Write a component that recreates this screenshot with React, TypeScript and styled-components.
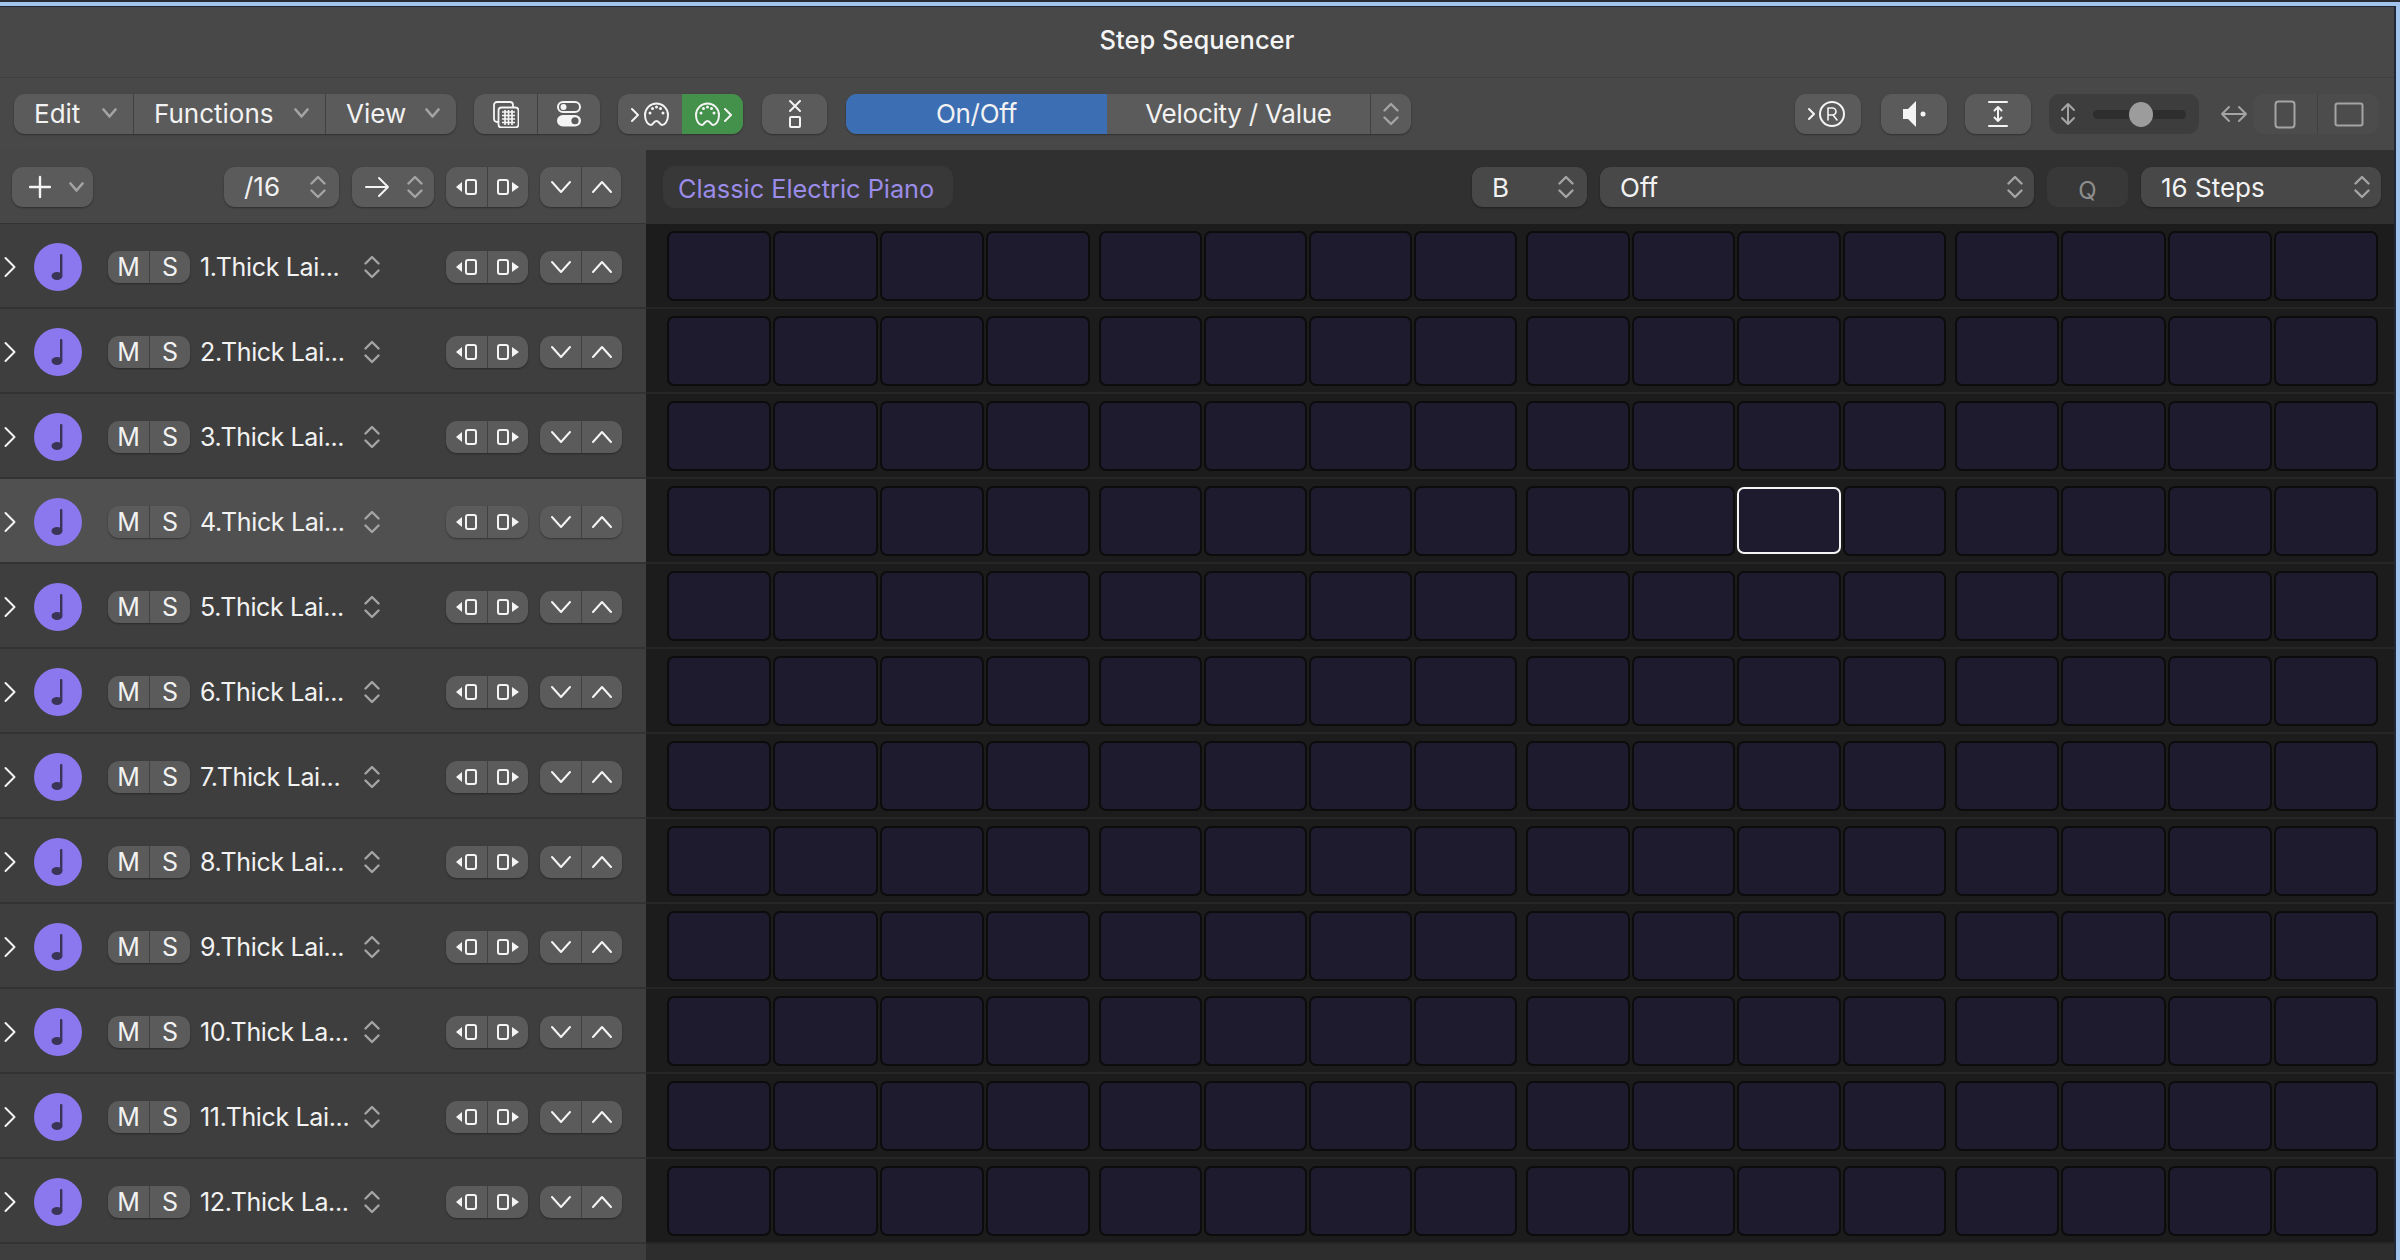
import React from "react";
import styled, { createGlobalStyle } from "styled-components";

const GlobalStyle = createGlobalStyle`
  html, body { margin: 0; padding: 0; background: #1b1b1b; }
  body { font-family: Inter, "Liberation Sans", sans-serif; color: #f2f2f2; }
`;

const rows = [
  "1.Thick Lai...", "2.Thick Lai...", "3.Thick Lai...", "4.Thick Lai...",
  "5.Thick Lai...", "6.Thick Lai...", "7.Thick Lai...", "8.Thick Lai...",
  "9.Thick Lai...", "10.Thick La...", "11.Thick Lai...", "12.Thick La...",
];

const Icon = ({ w, h, children, dim }: { w: number; h: number; children: React.ReactNode; dim?: boolean }) => (
  <svg width={w} height={h} viewBox={`0 0 ${w} ${h}`} fill="none" stroke={dim ? "#a4a4a4" : "#f4f4f4"} strokeWidth="2" strokeLinecap="round" strokeLinejoin="round">
    {children}
  </svg>
);

const Updown = ({ dim = true }: { dim?: boolean }) => (
  <Icon w={16} h={24} dim={dim}>
    <path d="M1.500 8.500L8 2l6.500 6.500M1.500 15.500L8 22l6.500-6.500" strokeWidth="2.400" />
  </Icon>
);

const Chevron = ({ up }: { up?: boolean }) => (
  <Icon w={20} h={14}>
    <path d={up ? "M1 12l9-10 9 10" : "M1 2l9 10 9-10"} />
  </Icon>
);

const Caret = () => (
  <Icon w={15} h={10} dim>
    <path d="M1.500 1.500l6 7 6-7" strokeWidth="2.600" />
  </Icon>
);

const PadLeft = () => (
  <Icon w={24} h={18}>
    <path d="M7 4v10L1 9z" fill="#f4f4f4" stroke="none" />
    <rect x="11" y="2" width="10" height="14" rx="2" />
  </Icon>
);

const PadRight = () => (
  <Icon w={24} h={18}>
    <rect x="2" y="2" width="10" height="14" rx="2" />
    <path d="M16 4v10l7-5z" fill="#f4f4f4" stroke="none" />
  </Icon>
);

const Midi = ({ out }: { out?: boolean }) => (
  <Icon w={38} h={28}>
    <g transform={out ? "translate(0 0)" : "translate(12 0)"}>
      <path d="M8 25c-3 0-6-4-6-10a11.500 11.500 0 0 1 23 0c0 6-3 10-6 10-2 0-2.500-4-5.500-4S10 25 8 25z" />
      <g fill="#f4f4f4" stroke="none">
        <circle cx="7" cy="13" r="1.500" /><circle cx="9.500" cy="8.500" r="1.500" /><circle cx="13.500" cy="7" r="1.500" /><circle cx="17.500" cy="8.500" r="1.500" /><circle cx="20" cy="13" r="1.500" />
      </g>
    </g>
    <path d={out ? "M31 9l6 6-6 6" : "M1 9l6 6-6 6"} />
  </Icon>
);

const Note = () => (
  <svg width="18" height="28" viewBox="0 0 18 28" fill="#3a3556">
    <rect x="11" y="1" width="2.400" height="22" rx="1" />
    <ellipse cx="8" cy="23" rx="5.500" ry="4" />
  </svg>
);

const Page = styled.div`
  width: 2400px;
  height: 1260px;
  overflow: hidden;
  display: flex;
  flex-direction: column;
  border-top: 2px solid #2a2d33;
  box-sizing: border-box;
  position: relative;
`;

const BlueLine = styled.div`
  height: 4px;
  flex: none;
  background: #a2c5ee;
`;

const TitleBar = styled.div`
  height: 72px;
  flex: none;
  box-sizing: border-box;
  display: flex;
  align-items: center;
  justify-content: center;
  padding: 0 6px 6px 0;
  background: #484848;
  border-top: 1px solid #1f2838;
  border-bottom: 1px solid #3f3f3f;
  font-size: 25.500px;
  font-weight: 500;
  color: #f4f4f4;
`;

const Toolbar = styled.div`
  height: 72px;
  flex: none;
  display: flex;
  align-items: center;
  background: #484848;
  padding: 0 21px 0 14px;
  font-size: 26px;
`;

const Group = styled.div<{ $w?: number; $ml?: number; $h?: number; $flat?: boolean; $small?: boolean }>`
  display: flex;
  align-items: stretch;
  flex: none;
  height: ${(p) => p.$h ?? 40}px;
  width: ${(p) => (p.$w ? `${p.$w}px` : "auto")};
  margin-left: ${(p) => p.$ml ?? 0}px;
  border-radius: 11px;
  overflow: hidden;
  font-size: ${(p) => (p.$small ? "25px" : "inherit")};
  background: ${(p) => (p.$flat ? "#4c4c4c" : "#5b5b5b")};
  box-shadow: ${(p) => (p.$flat ? "none" : "0 1px 2px rgba(0, 0, 0, 0.35)")};
`;

const Seg = styled.div<{ $w?: number; $on?: string; $sep?: boolean; $grow?: boolean; $gap?: number }>`
  display: flex;
  align-items: center;
  justify-content: center;
  box-sizing: border-box;
  flex: ${(p) => (p.$grow ? "1" : "none")};
  gap: ${(p) => p.$gap ?? 14}px;
  width: ${(p) => (p.$w ? `${p.$w}px` : "auto")};
  background: ${(p) => p.$on ?? "transparent"};
  border-left: ${(p) => (p.$sep ? "1px solid #414141" : "none")};
`;

const MenuSeg = styled(Seg)`
  justify-content: space-between;
  padding: 0 16px 2px 20px;
`;

const TextSeg = styled(Seg)`
  padding-bottom: 2px;
  letter-spacing: -0.25px;
`;

const AddSeg = styled(Seg)`
  justify-content: flex-start;
  padding-left: 17px;
`;

const Spacer = styled.div`
  flex: 1;
`;

const SliderBox = styled.div`
  flex: none;
  width: 150px;
  height: 40px;
  margin-left: 18px;
  display: flex;
  align-items: center;
  padding-left: 11px;
  box-sizing: border-box;
  gap: 17px;
  border-radius: 11px;
  background: #3d3d3d;
`;

const Track = styled.div`
  position: relative;
  width: 93px;
  height: 9px;
  border-radius: 5px;
  background: #2e2e2e;
`;

const Thumb = styled.div`
  position: absolute;
  left: 36px;
  top: -8px;
  width: 24px;
  height: 25px;
  border-radius: 50%;
  background: #9c9c9c;
`;

const WidthArrow = styled.div`
  flex: none;
  display: flex;
  margin-left: 21px;
`;

const Body = styled.div`
  flex: 1;
  display: flex;
  min-height: 0;
`;

const Left = styled.div`
  flex: none;
  width: 646px;
  background: #3e3e3e;
  display: flex;
  flex-direction: column;
`;

const Right = styled.div`
  flex: 1;
  background: #1c1c1c;
  display: flex;
  flex-direction: column;
`;

const LeftHead = styled.div`
  height: 73px;
  flex: none;
  display: flex;
  align-items: center;
  background: #474747;
  border-bottom: 1px solid #333;
  padding: 0 0 0 12px;
  font-size: 26px;
`;

const RightHead = styled.div`
  height: 74px;
  flex: none;
  display: flex;
  align-items: center;
  background: #303030;
  padding-left: 17px;
  font-size: 26px;
`;

const Classic = styled.div`
  flex: none;
  width: 290px;
  height: 42px;
  box-sizing: border-box;
  padding: 2px 0 0 15px;
  display: flex;
  align-items: center;
  border-radius: 12px;
  background: #383838;
  color: #9a8ce8;
  font-size: 25.300px;
`;

const Select = styled.div<{ $w: number; $ml: number }>`
  flex: none;
  width: ${(p) => p.$w}px;
  margin-left: ${(p) => p.$ml}px;
  height: 40px;
  box-sizing: border-box;
  padding: 0 ${(p) => (p.$w > 200 ? 11 : 13)}px 0 20px;
  display: flex;
  align-items: center;
  justify-content: space-between;
  border-radius: 11px;
  background: #484848;
  box-shadow: 0 1px 2px rgba(0, 0, 0, 0.35);
`;

const SmallSelect = styled(Select)`
  background: #5b5b5b;
`;

const QBox = styled.div`
  flex: none;
  width: 81px;
  height: 40px;
  margin-left: 13px;
  padding-top: 6px;
  box-sizing: border-box;
  display: flex;
  align-items: center;
  justify-content: center;
  border-radius: 11px;
  background: #383838;
  color: #8e8e8e;
  font-size: 24px;
`;

const Row = styled.div<{ $active?: boolean }>`
  height: 85px;
  flex: none;
  box-sizing: border-box;
  display: flex;
  align-items: center;
  padding-top: 3px;
  background: ${(p) => (p.$active ? "#505050" : "#3e3e3e")};
  border-bottom: 2px solid #333;
`;

const Expand = styled.div`
  width: 34px;
  padding-left: 4px;
  box-sizing: border-box;
  flex: none;
  display: flex;
  align-items: center;
`;

const NoteCircle = styled.div`
  width: 48px;
  height: 48px;
  flex: none;
  border-radius: 50%;
  background: #8c78ee;
  display: flex;
  align-items: center;
  justify-content: center;
`;

const RowName = styled.div`
  width: 164px;
  flex: none;
  margin-left: 10px;
  font-size: 25px;
  letter-spacing: -0.35px;
  white-space: nowrap;
`;

const GridRow = styled.div`
  height: 85px;
  flex: none;
  box-sizing: border-box;
  display: grid;
  grid-template-columns: 423px 418px 420px 423px;
  gap: 9px;
  padding: 7px 0 0 21px;
  border-bottom: 2px solid #262626;
`;

const Bar = styled.div`
  display: grid;
  grid-template-columns: repeat(4, 1fr);
  gap: 2px;
  height: 70px;
`;

const Cell = styled.div<{ $sel?: boolean }>`
  box-sizing: border-box;
  border-radius: 7px;
  background: #1e1b2f;
  border: 2px solid ${(p) => (p.$sel ? "#f4f4f4" : "#0c0c0c")};
  margin: ${(p) => (p.$sel ? "1px 0 2px" : "0")};
`;

const Foot = styled.div`
  flex: 1;
  background: #2d2d2d;
`;

const EdgeBlue = styled.div`
  position: absolute;
  right: 0;
  top: 0;
  bottom: 0;
  width: 4px;
  background: #a2c5ee;
`;

const EdgeDark = styled.div`
  position: absolute;
  right: 4px;
  top: 4px;
  bottom: 0;
  width: 2px;
  background: #1f2838;
`;

export default function App() {
  return (
    <>
      <GlobalStyle />
      <Page>
        <BlueLine />
        <TitleBar>Step Sequencer</TitleBar>
        <Toolbar>
          <Group $w={442}>
            <MenuSeg $w={119}>Edit <Caret /></MenuSeg>
            <MenuSeg $w={192} $sep>Functions <Caret /></MenuSeg>
            <MenuSeg $grow $sep>View <Caret /></MenuSeg>
          </Group>
          <Group $w={126} $ml={18}>
            <Seg $w={63}>
              <Icon w={26} h={27}>
                <rect x="1" y="1" width="19" height="20" rx="3" strokeWidth="1.800" />
                <rect x="5.500" y="6.500" width="20" height="20" rx="3" fill="#5b5b5b" strokeWidth="1.800" />
                <path d="M9 11h13M9 14.500h13M9 18h13M9 21.500h13M12 9v15M15.500 9v15M19 9v15" strokeWidth="1.700" strokeLinecap="butt" />
              </Icon>
            </Seg>
            <Seg $grow $sep>
              <Icon w={26} h={26}>
                <rect x="2" y="1" width="22" height="10" rx="5" />
                <circle cx="7.500" cy="6" r="3" fill="#f4f4f4" stroke="none" />
                <rect x="1" y="14" width="24" height="11.500" rx="5.750" fill="#f4f4f4" stroke="none" />
                <circle cx="19" cy="19.750" r="3.600" fill="#5b5b5b" stroke="none" />
              </Icon>
            </Seg>
          </Group>
          <Group $w={125} $ml={18}>
            <Seg $w={64}><Midi /></Seg>
            <Seg $grow $on="#43914a"><Midi out /></Seg>
          </Group>
          <Group $w={65} $ml={19}>
            <Seg $grow>
              <Icon w={16} h={30}>
                <path d="M3 2l10 10M13 2L3 12" />
                <rect x="3" y="18" width="10" height="10" rx="1" />
              </Icon>
            </Seg>
          </Group>
          <Group $w={565} $ml={19}>
            <TextSeg $w={261} $on="#3c6eb4">On/Off</TextSeg>
            <TextSeg $w={263}>Velocity / Value</TextSeg>
            <Seg $grow $sep><Updown /></Seg>
          </Group>
          <Spacer />
          <Group $w={66}>
            <Seg $grow>
              <Icon w={40} h={28}>
                <path d="M1 9l5 5-5 5" />
                <circle cx="24" cy="14" r="12" />
                <path d="M20 20V8h4.500a3.500 3.500 0 0 1 0 7H20M25 15l4 5" strokeWidth="1.600" />
              </Icon>
            </Seg>
          </Group>
          <Group $w={66} $ml={20}>
            <Seg $grow>
              <Icon w={24} h={28}>
                <path d="M1 9h5l8-8v26l-8-8H1z" fill="#f4f4f4" stroke="none" />
                <circle cx="21" cy="14" r="2.500" fill="#f4f4f4" stroke="none" />
              </Icon>
            </Seg>
          </Group>
          <Group $w={66} $ml={18}>
            <Seg $grow>
              <Icon w={20} h={28}>
                <path d="M1 2h18M1 26h18M10 7v14M6.500 10.500L10 7l3.500 3.500M6.500 17.500L10 21l3.500-3.500" />
              </Icon>
            </Seg>
          </Group>
          <SliderBox>
            <Icon w={16} h={24} dim>
              <path d="M8 2v20M2 8l6-6 6 6M2 16l6 6 6-6" />
            </Icon>
            <Track><Thumb /></Track>
          </SliderBox>
          <WidthArrow>
            <Icon w={28} h={20} dim>
              <path d="M2 10h24M9 3l-7 7 7 7M19 3l7 7-7 7" />
            </Icon>
          </WidthArrow>
          <Group $w={126} $ml={5} $flat>
            <Seg $w={64}>
              <Icon w={22} h={29} dim>
                <rect x="1.500" y="1.500" width="19" height="26" rx="3" />
              </Icon>
            </Seg>
            <Seg $grow $sep>
              <Icon w={30} h={25} dim>
                <rect x="1.500" y="1.500" width="27" height="22" rx="2" />
              </Icon>
            </Seg>
          </Group>
        </Toolbar>
        <Body>
          <Left>
            <LeftHead>
              <Group $w={81}>
                <AddSeg $grow $gap={18}>
                  <Icon w={22} h={24}><path d="M11 2v20M1 12h20" strokeWidth="2.400" /></Icon>
                  <Caret />
                </AddSeg>
              </Group>
              <SmallSelect $w={115} $ml={131}>
                <span>/16</span><Updown />
              </SmallSelect>
              <Group $w={82} $ml={13}>
                <Seg $grow $gap={17}>
                  <Icon w={26} h={24}><path d="M2 12h22M15 3l9 9-9 9" /></Icon>
                  <Updown />
                </Seg>
              </Group>
              <Group $w={82} $ml={12}>
                <Seg $w={41}><PadLeft /></Seg>
                <Seg $grow $sep><PadRight /></Seg>
              </Group>
              <Group $w={81} $ml={12}>
                <Seg $w={41}><Chevron /></Seg>
                <Seg $grow $sep><Chevron up /></Seg>
              </Group>
            </LeftHead>
            {rows.map((name, i) => (
              <Row key={name} $active={i === 3}>
                <Expand>
                  <Icon w={12} h={22}><path d="M1.500 2l9 9-9 9" /></Icon>
                </Expand>
                <NoteCircle><Note /></NoteCircle>
                <Group $w={82} $h={32} $ml={26} $small>
                  <Seg $w={41}>M</Seg>
                  <Seg $grow $sep>S</Seg>
                </Group>
                <RowName>{name}</RowName>
                <Updown />
                <Group $w={82} $h={32} $ml={66}>
                  <Seg $w={41}><PadLeft /></Seg>
                  <Seg $grow $sep><PadRight /></Seg>
                </Group>
                <Group $w={82} $h={32} $ml={12}>
                  <Seg $w={41}><Chevron /></Seg>
                  <Seg $grow $sep><Chevron up /></Seg>
                </Group>
              </Row>
            ))}
          </Left>
          <Right>
            <RightHead>
              <Classic>Classic Electric Piano</Classic>
              <Select $w={115} $ml={519}>
                <span>B</span><Updown />
              </Select>
              <Select $w={434} $ml={13}>
                <span>Off</span><Updown />
              </Select>
              <QBox>Q</QBox>
              <Select $w={240} $ml={13}>
                <span>16 Steps</span><Updown />
              </Select>
            </RightHead>
            {rows.map((name, r) => (
              <GridRow key={name}>
                {[0, 1, 2, 3].map((b) => (
                  <Bar key={b}>
                    {[0, 1, 2, 3].map((c) => (
                      <Cell key={c} $sel={r === 3 && b === 2 && c === 2} />
                    ))}
                  </Bar>
                ))}
              </GridRow>
            ))}
            <Foot />
          </Right>
        </Body>
        <EdgeBlue />
        <EdgeDark />
      </Page>
    </>
  );
}
